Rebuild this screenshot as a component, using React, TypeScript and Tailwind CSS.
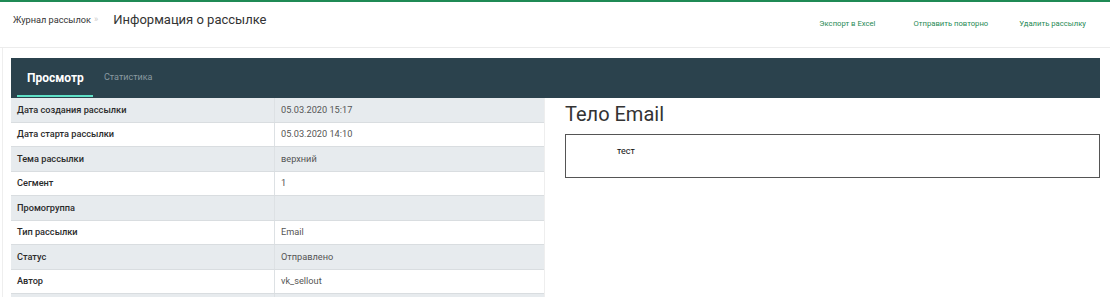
import React from "react";

const rows: [string, string][] = [
  ["Дата создания рассылки", "05.03.2020 15:17"],
  ["Дата старта рассылки", "05.03.2020 14:10"],
  ["Тема рассылки", "верхний"],
  ["Сегмент", "1"],
  ["Промогруппа", ""],
  ["Тип рассылки", "Email"],
  ["Статус", "Отправлено"],
  ["Автор", "vk_sellout"],
  ["", ""],
];

export default function App() {
  return (
    <div
      className="w-[1110px] h-[297px] overflow-hidden bg-white border-t-2 border-[#1f8a55]"
      style={{ fontFamily: "Roboto, 'Noto Sans', sans-serif" }}
    >
      <div className="h-[46px] flex items-center border-b border-[#ececec]">
        <div className="flex items-center pl-[13px] -mt-[9px]">
          <span className="text-[9.2px] text-[#333]">Журнал рассылок</span>
          <span className="text-[9px] text-[#ccc] ml-[3px]">»</span>
          <span className="text-[13px] text-[#333] ml-[15px]">Информация о рассылке</span>
        </div>
        <div className="ml-auto flex items-center text-[7.7px] text-[#1f8a55] -mt-[1px]">
          <span className="mr-[38px]">Экспорт в Excel</span>
          <span className="mr-[31px]">Отправить повторно</span>
          <span className="mr-[24px]">Удалить рассылку</span>
        </div>
      </div>
      <div className="ml-[2px] border-l border-[#eee] h-full pt-[10px] pl-[8px] pr-[10px]">
        <div className="h-[40px] bg-[#2b424d] flex items-stretch pl-[6px]">
          <div className="relative flex items-center px-[10px] w-[76px]">
            <span className="text-[12px] font-bold text-white">Просмотр</span>
            <div className="absolute left-0 right-0 bottom-[1px] h-[2px] bg-[#5fe0c6]" />
          </div>
          <div className="flex items-center pl-[11px]">
            <span className="text-[9px] text-[#8a9aa1]">Статистика</span>
          </div>
        </div>
        <div className="flex">
          <div className="w-[534px] shrink-0 border-r border-[#eee]">
            {rows.map(([k, v], i) => (
              <div
                key={i}
                className={`h-[24.5px] flex border-b border-[#d9dde0] ${i % 2 === 0 ? "bg-[#e7ebee]" : "bg-white"}`}
              >
                <div className="w-[264px] pl-[6px] flex items-center text-[9.2px] font-medium text-[#2a2a2a] border-r border-[#dde1e4]">
                  {k}
                </div>
                <div className="flex-1 pl-[6px] flex items-center text-[9.2px] text-[#555]">{v}</div>
              </div>
            ))}
          </div>
          <div className="flex-1 pl-[20px] pt-[3px]">
            <div className="text-[20px] text-[#333] leading-[26px]">Тело Email</div>
            <div className="mt-[7px] h-[44px] border border-[#555] pl-[51px] pt-[10px] text-[9px] text-[#111]">тест</div>
          </div>
        </div>
      </div>
    </div>
  );
}
